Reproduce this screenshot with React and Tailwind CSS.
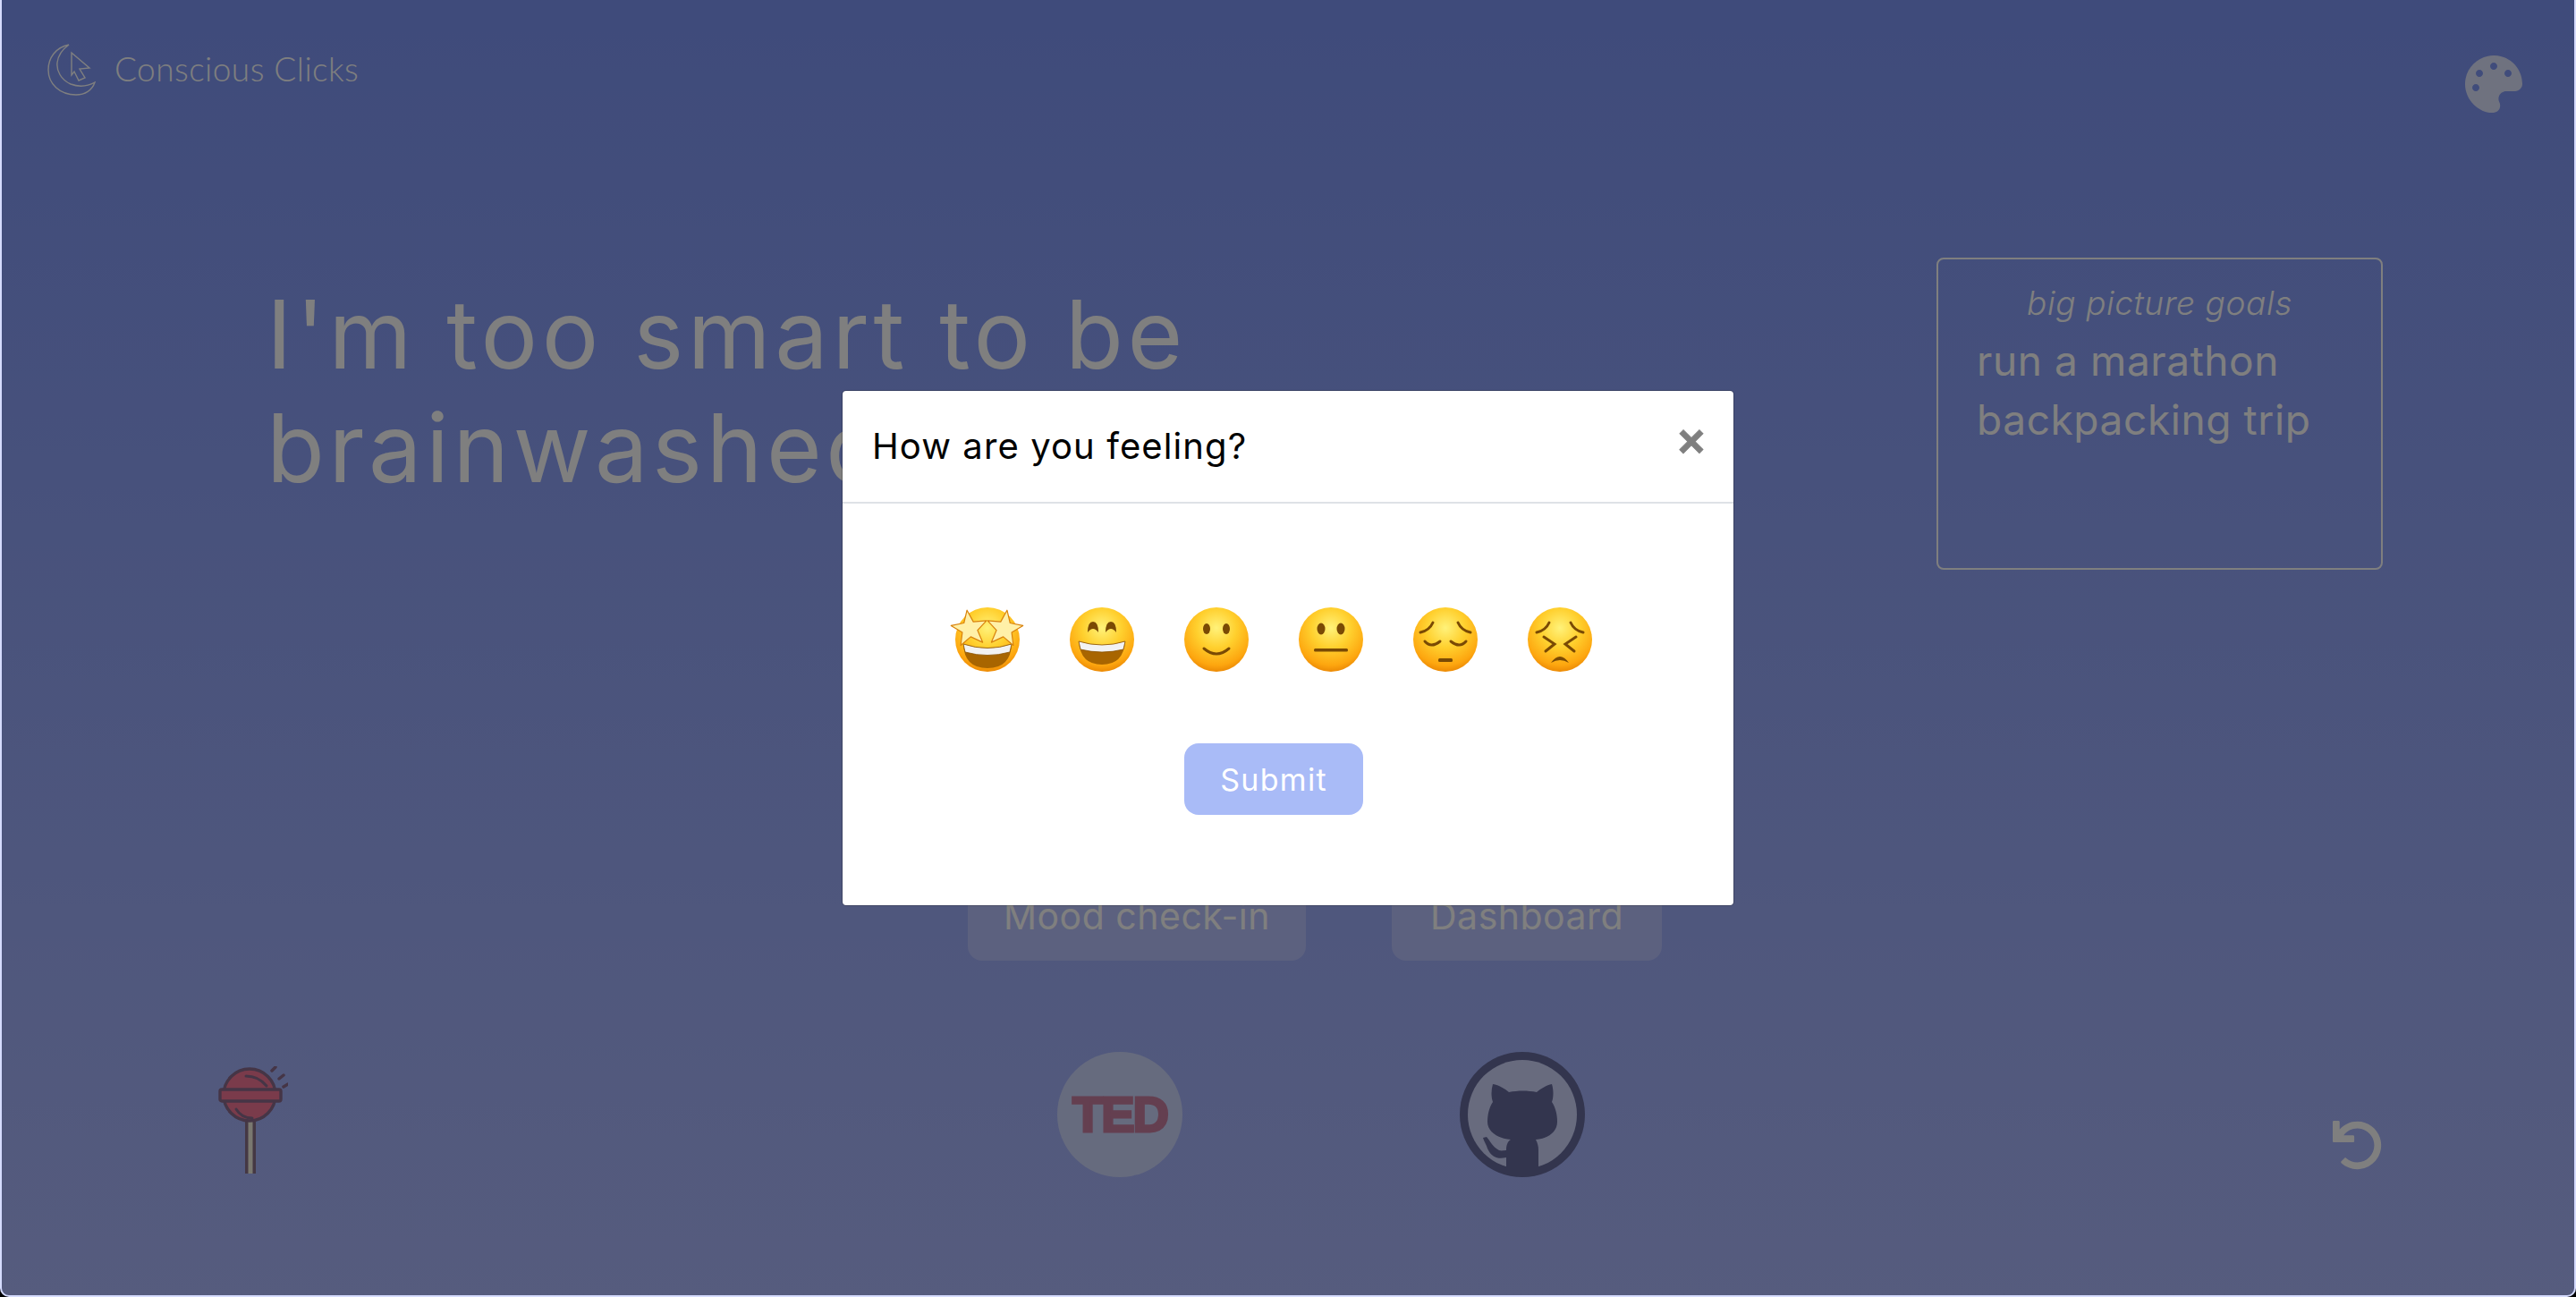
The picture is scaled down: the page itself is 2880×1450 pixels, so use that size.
import React from "react";
import { FaPalette, FaUndo } from "react-icons/fa";

const BODY_FONT = "font-['Inter','Liberation_Sans',sans-serif]";

function starPoints(cx, cy, outer, inner, rot) {
  const pts = [];
  for (let i = 0; i < 10; i++) {
    const r = i % 2 === 0 ? outer : inner;
    const a = ((rot + i * 36 - 90) * Math.PI) / 180;
    pts.push(`${(cx + r * Math.cos(a)).toFixed(1)},${(cy + r * Math.sin(a)).toFixed(1)}`);
  }
  return pts.join(" ");
}

function Face({ children, id }) {
  return (
    <svg viewBox="0 0 72 72" className="w-[72px] h-[72px] overflow-visible">
      <defs>
        <radialGradient id={id} cx="50%" cy="32%" r="68%">
          <stop offset="0%" stopColor="#fff27a" />
          <stop offset="45%" stopColor="#ffd02e" />
          <stop offset="85%" stopColor="#fda60f" />
          <stop offset="100%" stopColor="#ec8a05" />
        </radialGradient>
      </defs>
      <circle cx="36" cy="36" r="36" fill={`url(#${id})`} />
      {children}
    </svg>
  );
}

const BROWN = "#7a4a04";

const FACES = [
  {
    id: "star",
    shape: (
      <>
        <path d="M9 41 Q36 50 63 41 Q62 68 36 68 Q10 68 9 41Z" fill="#a86500" />
        <path d="M9 41 Q36 50 63 41 L61 50 Q36 57 11 50Z" fill="#f2f2f2" stroke="#8a5200" strokeWidth="0.8" />
        <polygon points={starPoints(16, 24, 21, 9, -8)} fill="#fff0a8" stroke="#d9820c" strokeWidth="1.2" strokeLinejoin="round" />
        <polygon points={starPoints(55, 24, 21, 9, 8)} fill="#fff0a8" stroke="#d9820c" strokeWidth="1.2" strokeLinejoin="round" />
      </>
    ),
  },
  {
    id: "grin",
    shape: (
      <>
        <path d="M10 38 Q36 46 62 38 Q60 64 36 64 Q12 64 10 38Z" fill="#a86500" />
        <path d="M10 38 Q36 46 62 38 L60 47 Q36 53 12 47Z" fill="#f2f2f2" stroke="#8a5200" strokeWidth="0.8" />
        <path d="M20 28 Q20 16 26 16 Q32 16 32 28 Q26 20 20 28Z" fill={BROWN} />
        <path d="M40 28 Q40 16 46 16 Q52 16 52 28 Q46 20 40 28Z" fill={BROWN} />
      </>
    ),
  },
  {
    id: "smile",
    shape: (
      <>
        <ellipse cx="25" cy="24" rx="4" ry="6" fill={BROWN} />
        <ellipse cx="47" cy="24" rx="4" ry="6" fill={BROWN} />
        <path d="M22 46 Q36 58 50 46" fill="none" stroke={BROWN} strokeWidth="3" strokeLinecap="round" />
      </>
    ),
  },
  {
    id: "neutral",
    shape: (
      <>
        <ellipse cx="25" cy="24" rx="4.5" ry="6.5" fill={BROWN} />
        <ellipse cx="47" cy="24" rx="4.5" ry="6.5" fill={BROWN} />
        <rect x="17" y="46" width="38" height="3.5" rx="1.5" fill={BROWN} />
      </>
    ),
  },
  {
    id: "pensive",
    shape: (
      <>
        <path d="M8 28 Q18 26 22 17" fill="none" stroke={BROWN} strokeWidth="3" strokeLinecap="round" />
        <path d="M64 28 Q54 26 50 17" fill="none" stroke={BROWN} strokeWidth="3" strokeLinecap="round" />
        <path d="M13 38 Q20 46 30 38" fill="none" stroke={BROWN} strokeWidth="3" strokeLinecap="round" />
        <path d="M42 38 Q52 46 59 38" fill="none" stroke={BROWN} strokeWidth="3" strokeLinecap="round" />
        <rect x="28" y="57" width="16" height="4" rx="1.5" fill={BROWN} />
      </>
    ),
  },
  {
    id: "weary",
    shape: (
      <>
        <path d="M10 28 Q20 26 24 17" fill="none" stroke={BROWN} strokeWidth="3" strokeLinecap="round" />
        <path d="M62 28 Q52 26 48 17" fill="none" stroke={BROWN} strokeWidth="3" strokeLinecap="round" />
        <path d="M18 33 L30 41 L20 49" fill="none" stroke={BROWN} strokeWidth="3" strokeLinecap="round" />
        <path d="M54 33 L42 41 L52 49" fill="none" stroke={BROWN} strokeWidth="3" strokeLinecap="round" />
        <path d="M26 62 Q36 48 46 62 Q36 56 26 62Z" fill={BROWN} />
      </>
    ),
  },
];

function Logo() {
  return (
    <svg viewBox="0 0 54 58" className="w-[54px] h-[58px]" fill="none" stroke="#ffffff" strokeWidth="1.4">
      <path d="M24 1 C9 4 1 16 1 29 C1 45 14 57 32 57 C42 57 50 52 53 43 C44 48 34 48 26 45 C15 40 10 30 11 21 C12 12 17 6 24 1Z" />
      <path d="M27 10 L47 27 L36 28 L42 38 L35 41 L30 31 L27 35Z" />
    </svg>
  );
}

function Lollipop() {
  return (
    <svg viewBox="0 0 78 120" className="w-[78px] h-[120px]">
      <rect x="30" y="62" width="12" height="58" fill="#8a7088" />
      <rect x="33.5" y="62" width="5" height="58" fill="#f4f0e0" />
      <circle cx="35" cy="32" r="29" fill="#f47696" stroke="#8a6a8c" strokeWidth="3.4" />
      <path d="M31 11 Q45 11 54 22" fill="none" stroke="#8a6a8c" strokeWidth="3" strokeLinecap="round" />
      <path d="M20 48 Q26 58 38 58" fill="none" stroke="#8a6a8c" strokeWidth="3" strokeLinecap="round" />
      <rect x="2" y="26" width="68" height="13" rx="2" fill="#f47696" stroke="#8a6a8c" strokeWidth="3.4" />
      <path d="M60 5 L64 1 M68 14 L73 10 M73 23 L78 20" stroke="#8a6a8c" strokeWidth="3.5" strokeLinecap="round" />
    </svg>
  );
}

function GithubMark() {
  return (
    <svg viewBox="0 0 140 140" className="w-[140px] h-[140px]">
      <circle cx="70" cy="70" r="70" fill="#666a9c" />
      <circle cx="70" cy="70" r="61" fill="#d0d6fc" />
      <path
        d="M37 36 C44 37 50 41 55 45 C65 43 76 43 86 45 C91 41 97 37 103 36 C105 43 105 50 103 56 C107 62 109 70 109 78 C109 90 98 97 85 98 C87 102 88 105 88 110 L88 137 C82 140 60 140 52 137 L52 118 C44 120 36 119 31 108 C30 104 27 100 26 96 L30 95 C34 99 36 106 44 110 C47 111 50 110 52 110 C52 103 54 100 57 98 C44 97 31 90 31 78 C31 70 33 62 37 56 C35 50 35 43 37 36Z"
        fill="#666a9c"
      />
    </svg>
  );
}

export default function App() {
  return (
    <div className="h-screen bg-black">
      <div className={`relative h-full overflow-hidden rounded-b-[10px] flex flex-col border-x-2 border-b-2 border-[#d6dcff] bg-gradient-to-b from-[#7e96f6] to-[#acb8fc] text-white ${BODY_FONT}`}>
        <header className="flex justify-between items-start h-[154px] pl-[51px] pr-[58px]">
          <div className="flex items-center gap-[21px] mt-[49px]">
            <Logo />
            <span className="text-[37px] font-light font-['Lato',sans-serif] tracking-[0.45px] leading-[58px] -mt-[2px]">
              Conscious Clicks
            </span>
          </div>
          <FaPalette className="mt-[62px] w-16 h-16 text-[#dfe5ff]" />
        </header>

        <main className="flex justify-between items-start pl-[296px] pr-[214px] mt-[134px] h-[706px]">
          <h1 className="mt-[22px] w-[1300px] text-[106px] font-normal leading-[127px] tracking-[4.6px]">
            I'm too smart to be
            <br />
            brainwashed
          </h1>
          <div className="w-[499px] h-[349px] rounded-lg border-2 border-white pt-[27px]">
            <p className="text-center text-[37px] font-light italic leading-[44px] tracking-[0.6px]">big picture goals</p>
            <ul className="pl-[43px] mt-[9px] text-[46px] leading-[66px] tracking-[0.6px]">
              <li>run a marathon</li>
              <li>backpacking trip</li>
            </ul>
          </div>
        </main>

        <div className="flex gap-[96px] pl-[1080px] h-[80px]">
          <button className="w-[378px] h-20 pb-[20px] rounded-2xl bg-[#b8c2ff] text-[41px] tracking-[0.5px]">Mood check-in</button>
          <button className="w-[302px] h-20 pb-[20px] rounded-2xl bg-[#b8c2ff] text-[41px] tracking-[0.5px]">Dashboard</button>
        </div>

        <footer className="flex items-start pl-[242px] mt-[102px]">
          <div className="mt-[16px]">
            <Lollipop />
          </div>
          <div className="ml-[860px] w-[140px] h-[140px] rounded-full bg-[#cdd6fc] flex items-center justify-center">
            <span className="text-[#c87ea0] text-[56px] font-black font-['Liberation_Sans',sans-serif] tracking-[-2px] [-webkit-text-stroke:3px_#c87ea0]">
              TED
            </span>
          </div>
          <div className="ml-[310px]">
            <GithubMark />
          </div>
          <FaUndo className="ml-[836px] mt-[77px] w-[55px] h-[55px] text-white" />
        </footer>

        <div className="absolute inset-0 bg-black/50 flex justify-center pt-[436px]">
          <div className="w-[998px] h-[577px] rounded-[5px] border border-black/20 bg-white bg-clip-padding">
            <div className="flex justify-between items-center h-[126px] pl-[33px] pr-[32px] border-b-2 border-[#dee2e6]">
              <h2 className="text-[40px] text-black tracking-[1.1px]">How are you feeling?</h2>
              <button className="text-[52px] font-bold leading-none text-black/50 font-['Liberation_Sans',sans-serif] -mt-[12px] [-webkit-text-stroke:1px_#808080]">
                ×
              </button>
            </div>
            <div className="w-[768px] ml-[98px] mt-[116px] flex flex-col items-center">
              <div className="flex">
                {FACES.map((f) => (
                  <div key={f.id} className="w-[128px] flex justify-center">
                    <Face id={f.id}>{f.shape}</Face>
                  </div>
                ))}
              </div>
              <button className="mt-[80px] w-[200px] h-20 rounded-2xl bg-[#a9bbf7] text-white text-[34px] tracking-[1.3px]">
                Submit
              </button>
            </div>
          </div>
        </div>
      </div>
    </div>
  );
}
